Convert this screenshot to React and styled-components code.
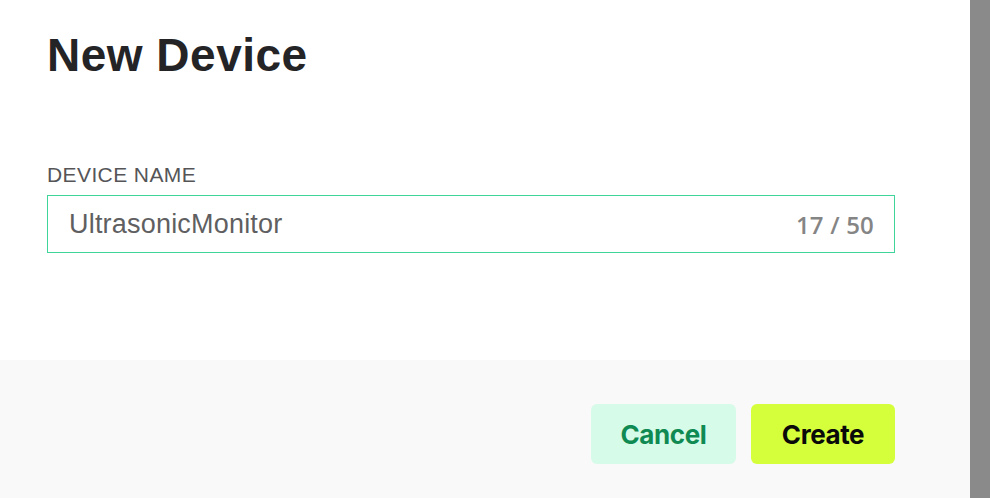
import styled, { createGlobalStyle } from "styled-components";

const GlobalStyle = createGlobalStyle`
  html, body {
    margin: 0;
    padding: 0;
    background: #8a8a8a;
    font-family: "Liberation Sans", Arial, sans-serif;
  }
`;

function App() {
  return (
    <>
      <GlobalStyle />
      <Page>
        <Dialog>
          <Body>
            <Title>New Device</Title>
            <Field>
              <Label>DEVICE NAME</Label>
              <InputBox>
                <InputText defaultValue="UltrasonicMonitor" maxLength={50} />
                <Counter>17 / 50</Counter>
              </InputBox>
            </Field>
          </Body>
          <Footer>
            <Button variant="secondary">Cancel</Button>
            <Button variant="primary">Create</Button>
          </Footer>
        </Dialog>
        <Scrollbar />
      </Page>
    </>
  );
}

const Page = styled.div`
  display: flex;
  width: 990px;
  height: 498px;
  overflow: hidden;
`;

const Dialog = styled.div`
  width: 970px;
  display: flex;
  flex-direction: column;
  background: #ffffff;
`;

const Scrollbar = styled.div`
  flex: 1;
  background: #8a8a8a;
`;

const Body = styled.div`
  height: 360px;
  box-sizing: border-box;
  padding: 26px 75px 0 47px;
`;

const Title = styled.h1`
  margin: 0;
  font-family: "Liberation Sans", Arial, sans-serif;
  font-size: 46px;
  font-weight: 700;
  line-height: 58px;
  color: #242427;
  letter-spacing: 0.5px;
`;

const Field = styled.div`
  margin-top: 79px;
  display: flex;
  flex-direction: column;
`;

const Label = styled.div`
  font-size: 21px;
  line-height: 24px;
  color: #555558;
  letter-spacing: 0.4px;
  margin-bottom: 8px;
`;

const InputBox = styled.div`
  width: 848px;
  height: 58px;
  box-sizing: border-box;
  border: 1px solid #3ed49a;
  display: flex;
  align-items: center;
  padding: 0 20px 0 21px;
`;

const InputText = styled.input`
  flex: 1;
  border: none;
  outline: none;
  padding: 0;
  font-family: "Liberation Sans", Arial, sans-serif;
  font-size: 27px;
  color: #5f5f62;
  letter-spacing: 0.2px;
  background: transparent;
`;

const Counter = styled.span`
  font-family: "Open Sans", "Noto Sans", sans-serif;
  font-size: 24px;
  font-weight: 600;
  color: #858585;
  letter-spacing: 0.2px;
`;

const Footer = styled.div`
  flex: 1;
  background: #f9f9f9;
  display: flex;
  justify-content: flex-end;
  align-items: flex-start;
  gap: 15px;
  padding: 44px 75px 0 0;
`;

const Button = styled.button`
  width: ${(p) => (p.variant === "primary" ? "144px" : "145px")};
  height: 60px;
  border: none;
  border-radius: 6px;
  font-family: Inter, "Liberation Sans", sans-serif;
  font-size: 26px;
  font-weight: 700;
  letter-spacing: -0.4px;
  cursor: pointer;
  background: ${(p) => (p.variant === "primary" ? "#d4ff3a" : "#d7fbe9")};
  color: ${(p) => (p.variant === "primary" ? "#0a0a0a" : "#0f8a52")};
`;

export default App;
